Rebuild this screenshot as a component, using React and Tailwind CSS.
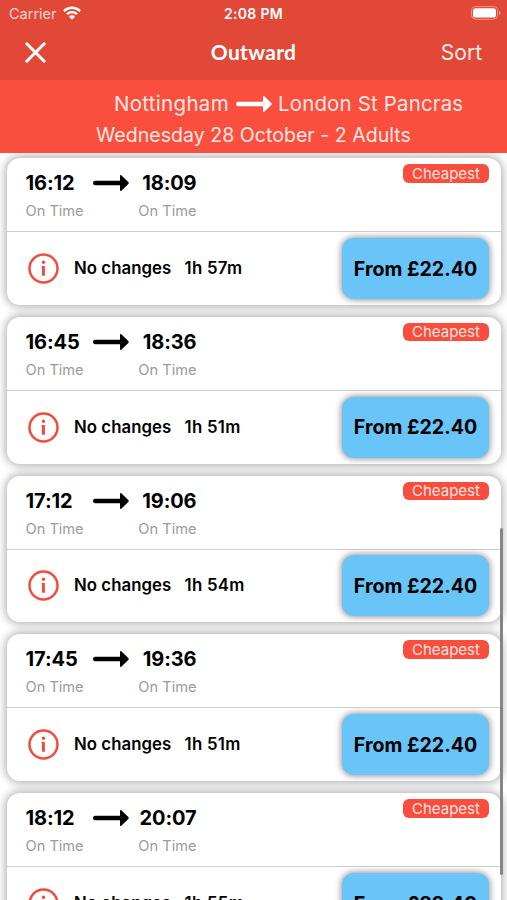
const trips = [
  { depart: "16:12", arrive: "18:09", duration: "1h 57m" },
  { depart: "16:45", arrive: "18:36", duration: "1h 51m" },
  { depart: "17:12", arrive: "19:06", duration: "1h 54m" },
  { depart: "17:45", arrive: "19:36", duration: "1h 51m" },
  { depart: "18:12", arrive: "20:07", duration: "1h 55m" },
];

function Arrow({ className }) {
  return (
    <svg viewBox="0 0 36 18" className={className} fill="currentColor" aria-hidden="true">
      <rect x="0" y="6.7" width="31" height="4.6" rx="2.3" />
      <path d="M27 1.8q.2-1.2 1.3-.5l7 6.8q.9.9 0 1.8l-7 6.8q-1.1.7-1.3-.5z" />
    </svg>
  );
}

function StatusBar() {
  return (
    <div className="flex h-[27px] items-center justify-between pl-[9px] pr-[6px]">
      <div className="flex flex-1 items-center gap-[6px]">
        <span className="text-[14.5px] text-[#fbd9d3]">Carrier</span>
        <svg viewBox="0 0 18 14" className="-mt-[2px] h-[14px] w-[18px]" aria-hidden="true">
          <g fill="none" stroke="white" strokeWidth="2.3">
            <path d="M.9 5.1a11.5 11.5 0 0 1 16.2 0" />
            <path d="M3.9 8.3a7.2 7.2 0 0 1 10.2 0" />
          </g>
          <path d="M9 13.7 5.9 10.5a4.4 4.4 0 0 1 6.2 0z" fill="white" />
        </svg>
      </div>
      <span className="mr-[3px] text-[14px] font-semibold tracking-[0.3px]">2:08 PM</span>
      <div className="flex flex-1 justify-end">
        <svg viewBox="0 0 30 14" className="-mt-px h-[14px] w-[30px]" aria-hidden="true">
          <rect x=".6" y=".6" width="26" height="12.6" rx="4" fill="none" stroke="#ee9689" strokeWidth="1" />
          <rect x="2" y="2.2" width="23" height="9.4" rx="2.6" fill="white" />
          <path d="M28 4.6q1.6.7 1.6 2.3T28 9.2z" fill="#ee9689" />
        </svg>
      </div>
    </div>
  );
}

function TripCard({ depart, arrive, duration }) {
  return (
    <article className="h-[146.75px] shrink-0 rounded-[13px] bg-white shadow-[0_0_8px_2px_rgba(0,0,0,0.3)]">
      <div className="flex h-[74px] justify-between border-b border-[#cfcfcf] pl-[18.5px] pr-3">
        <div className="w-[171px] pt-[13px]">
          <div className="flex h-6 items-center text-[20px] font-bold tracking-[-0.1px]">
            <span className="w-[67.5px]">{depart}</span>
            <Arrow className="h-[18px] w-9" />
            <span className="flex-1 text-right">{arrive}</span>
          </div>
          <div className="mt-[5px] flex h-6 items-center justify-between text-[14.6px] text-[#9b9b9b]">
            <span>On Time</span>
            <span>On Time</span>
          </div>
        </div>
        <span className="mt-[6px] flex h-[18.5px] w-[86px] items-center justify-center rounded-[6px] bg-[#f94d3d] pt-px text-[15px] text-[#ffe5e0]">
          Cheapest
        </span>
      </div>
      <div className="flex h-[72.75px] items-center pl-[21px] pr-3">
        <svg viewBox="0 0 31 31" className="h-[31px] w-[31px]" aria-hidden="true">
          <circle cx="15.5" cy="15.5" r="14" fill="none" stroke="#f44b3c" strokeWidth="2.5" />
          <circle cx="15.5" cy="9.3" r="1.7" fill="#f44b3c" />
          <path d="M13.5 13h3.4v9.8H14v-8.4h-.5z" fill="#f44b3c" />
        </svg>
        <span className="ml-[15px] w-[110.5px] text-[16.8px] font-semibold tracking-[0.05px] whitespace-nowrap">No changes</span>
        <span className="text-[16.8px] font-semibold tracking-[0.3px] whitespace-nowrap">{duration}</span>
        <button className="ml-auto h-[61px] w-[147px] rounded-[12px] bg-[#69c4f8] pt-[2px] text-[19.6px] font-bold whitespace-nowrap text-black shadow-[0_0_6px_1px_rgba(0,0,0,0.42)]">
          From £22.40
        </button>
      </div>
    </article>
  );
}

export default function App() {
  return (
    <main className="relative flex h-[900px] w-[507px] flex-col overflow-hidden bg-white font-['Inter',sans-serif] text-black">
      <header className="h-20 shrink-0 bg-[#e24838] text-white">
        <StatusBar />
        <nav className="flex h-[50px] items-center pl-[25px] pr-[25px]">
          <div className="flex flex-1">
            <svg viewBox="0 0 21 21" className="h-[21px] w-[21px]" aria-hidden="true">
              <path d="M1.8 1.8 19.2 19.2M19.2 1.8 1.8 19.2" stroke="white" strokeWidth="3" strokeLinecap="round" />
            </svg>
          </div>
          <h1 className="font-['Lato',sans-serif] text-[21px] font-bold tracking-[0.3px]">Outward</h1>
          <span className="flex-1 pt-[2px] text-right text-[21px] text-[#ffece9]">Sort</span>
        </nav>
      </header>
      <section className="h-[73px] shrink-0 bg-[#fa4f3e] pt-[9px] text-[20px] text-[#ffe8e3]">
        <div className="ml-[114px] flex h-[30px] items-center whitespace-nowrap">
          <span className="w-[122px] text-[20.5px] tracking-[0.3px]">Nottingham</span>
          <Arrow className="h-[18px] w-9 text-white" />
          <span className="ml-[6px] text-[20.4px] tracking-[0.2px]">London St Pancras</span>
        </div>
        <div className="flex h-[34px] items-center justify-center text-[19.5px] tracking-[0.04px]">Wednesday 28 October - 2 Adults</div>
      </section>
      <div className="flex min-h-0 flex-1 flex-col gap-3 overflow-hidden pt-[5px] pr-[6px] pl-[7px]">
        {trips.map((trip) => (
          <TripCard key={trip.depart} {...trip} />
        ))}
      </div>
      <div className="absolute top-[528px] left-[500px] h-[347px] w-[3px] rounded-full bg-[#858585]" />
    </main>
  );
}
